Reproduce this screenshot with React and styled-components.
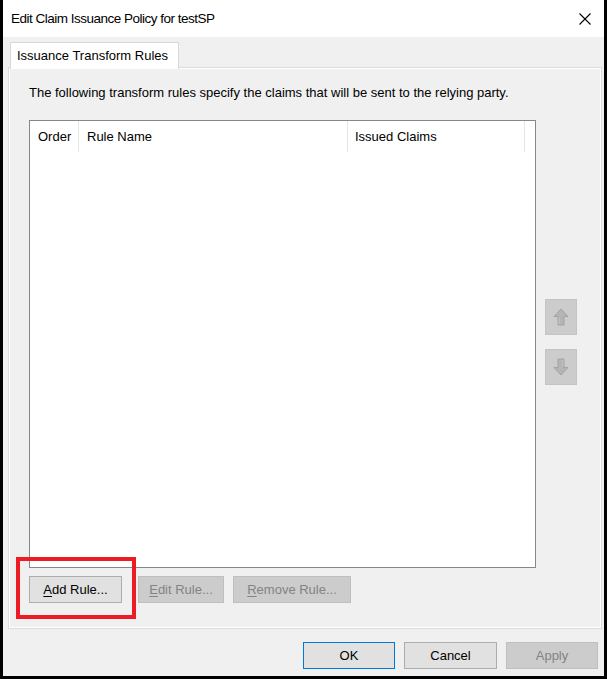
import React from "react";
import styled, { createGlobalStyle } from "styled-components";

const Global = createGlobalStyle`
  html, body { margin: 0; padding: 0; background: #000; }
  * { box-sizing: border-box; }
`;

const Window = styled.div`
  position: relative;
  width: 607px;
  height: 679px;
  border-left: 3px solid #000;
  border-right: 3px solid #000;
  border-bottom: 3px solid #000;
  background: #f0f0f0;
  display: flex;
  flex-direction: column;
  font-family: "Liberation Sans", Arial, sans-serif;
  font-size: 13px;
  color: #000;
`;

const TitleBar = styled.div`
  height: 37px;
  flex: none;
  background: #fff;
  display: flex;
  align-items: center;
  justify-content: space-between;
  padding: 0 13px 0 8px;
`;

const Title = styled.span`
  font-size: 13.5px;
  letter-spacing: -0.5px;
`;

const CloseIcon = () => (
  <svg width="12" height="12" viewBox="0 0 12 12">
    <path d="M0.5 0.5 L11.5 11.5 M11.5 0.5 L0.5 11.5" stroke="#000" strokeWidth="1.1" fill="none" />
  </svg>
);

const Body = styled.div`
  flex: 1;
  display: flex;
  flex-direction: column;
  padding: 5px 3px 0 6px;
`;

const TabStrip = styled.div`
  height: 26px;
  display: flex;
  padding-left: 1px;
`;

const Tab = styled.div`
  width: 169px;
  height: 27px;
  background: #fff;
  border: 1px solid #d9d9d9;
  border-bottom: none;
  padding: 5px 0 0 6px;
  position: relative;
  z-index: 1;
`;

const Panel = styled.div`
  height: 560px;
  border: 1px solid #fff;
  box-shadow: 0 0 0 1px #dcdcdc;
  background: #f0f0f0;
  padding: 16px 0 0 19px;
  display: flex;
  flex-direction: column;
`;

const Intro = styled.div`
  height: 16px;
  line-height: 16px;
`;

const MainRow = styled.div`
  margin-top: 19px;
  display: flex;
`;

const List = styled.div`
  width: 507px;
  height: 448px;
  border: 1px solid #828790;
  background: #fff;
`;

const HeaderRow = styled.div`
  display: flex;
  height: 31px;
`;

const HeaderCell = styled.div`
  width: ${(p) => p.$w}px;
  height: 31px;
  border-right: 1px solid #e5e5e5;
  padding-left: ${(p) => p.$pad}px;
  display: flex;
  align-items: center;
`;

const SideColumn = styled.div`
  margin-left: 9px;
  padding-top: 179px;
  display: flex;
  flex-direction: column;
  gap: 14px;
`;

const MoveButton = styled.div`
  width: 32px;
  height: 36px;
  background: #cccccc;
  border: 1px solid #c4c4c4;
  display: flex;
  align-items: center;
  justify-content: center;
`;

const Arrow = ({ down }) => (
  <svg width="16" height="18" viewBox="0 0 16 18" style={down ? { transform: "rotate(180deg)" } : undefined}>
    <path
      d="M8 1 L15 8.5 L11 8.5 L11 17 L5 17 L5 8.5 L1 8.5 Z"
      fill="#b5b5b5"
      stroke="#a3a3a3"
      strokeWidth="1"
      strokeLinejoin="round"
    />
    <path d="M6.2 9.5 L6.2 16" stroke="#c4c4c4" strokeWidth="1" />
  </svg>
);

const ButtonRow = styled.div`
  margin-top: 8px;
  display: flex;
`;

const Button = styled.div`
  width: ${(p) => p.$w}px;
  height: ${(p) => p.$h || 27}px;
  margin-right: ${(p) => p.$mr || 0}px;
  display: flex;
  align-items: center;
  justify-content: center;
  background: ${(p) => (p.$disabled ? "#cccccc" : "#e1e1e1")};
  border: 1px solid ${(p) => (p.$default ? "#0078d7" : p.$disabled ? "#bfbfbf" : "#adadad")};
  color: ${(p) => (p.$disabled ? "#838383" : "#000")};
  u { text-decoration: underline; text-underline-offset: 2px; }
`;

const Highlight = styled.div`
  position: absolute;
  left: 13px;
  top: 557px;
  width: 120px;
  height: 62px;
  border: 4px solid #ed1c24;
  pointer-events: none;
`;

const Footer = styled.div`
  margin-top: 14px;
  display: flex;
  justify-content: flex-end;
  gap: 9px;
  padding-right: 3px;
`;

export default function App() {
  return (
    <>
      <Global />
      <Window>
        <TitleBar>
          <Title>Edit Claim Issuance Policy for testSP</Title>
          <CloseIcon />
        </TitleBar>
        <Body>
          <TabStrip>
            <Tab>Issuance Transform Rules</Tab>
          </TabStrip>
          <Panel>
            <Intro>The following transform rules specify the claims that will be sent to the relying party.</Intro>
            <MainRow>
              <List>
                <HeaderRow>
                  <HeaderCell $w={49} $pad={8}>Order</HeaderCell>
                  <HeaderCell $w={269} $pad={8}>Rule Name</HeaderCell>
                  <HeaderCell $w={177} $pad={7}>Issued Claims</HeaderCell>
                </HeaderRow>
              </List>
              <SideColumn>
                <MoveButton><Arrow /></MoveButton>
                <MoveButton><Arrow down /></MoveButton>
              </SideColumn>
            </MainRow>
            <ButtonRow>
              <Button $w={93} $mr={16}><span><u>A</u>dd Rule...</span></Button>
              <Button $w={86} $mr={9} $disabled><span><u>E</u>dit Rule...</span></Button>
              <Button $w={118} $disabled><span><u>R</u>emove Rule...</span></Button>
            </ButtonRow>
          </Panel>
          <Footer>
            <Button $w={92} $h={27} $default>OK</Button>
            <Button $w={93} $h={27}>Cancel</Button>
            <Button $w={92} $h={27} $disabled>Apply</Button>
          </Footer>
        </Body>
        <Highlight />
      </Window>
    </>
  );
}
